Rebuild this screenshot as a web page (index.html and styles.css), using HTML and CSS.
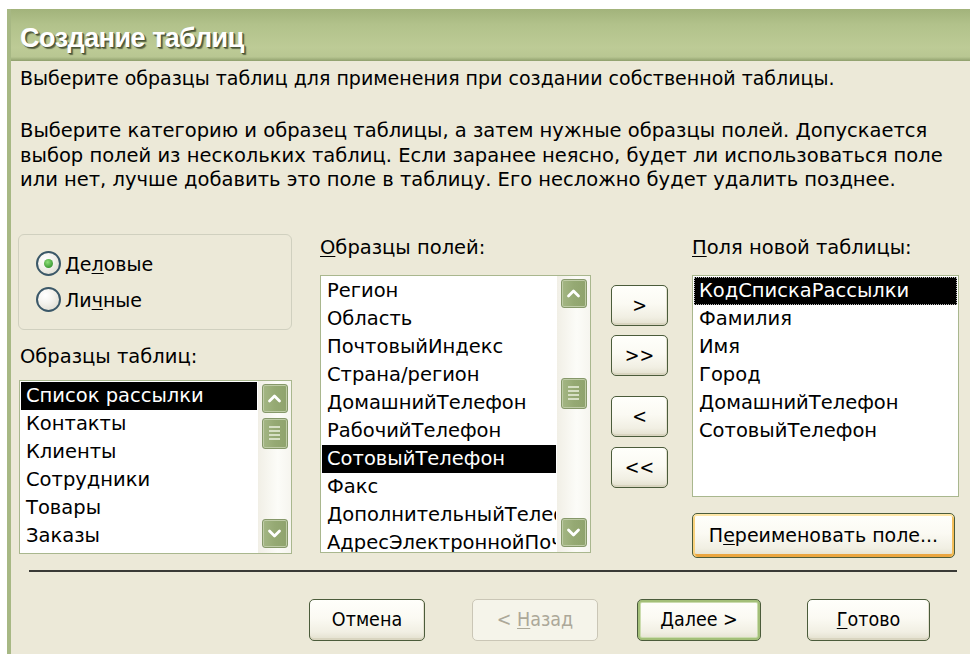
FILE: index.html
```html
<!DOCTYPE html>
<html lang="ru">
<head>
<meta charset="utf-8">
<title>Создание таблиц</title>
<link rel="stylesheet" href="styles.css">
</head>
<body>
<div class="window">
  <div class="titlebar"><span class="title">Создание таблиц</span></div>
  <div class="client">
    <p class="intro">Выберите образцы таблиц для применения при создании собственной таблицы.</p>
    <p class="desc">Выберите категорию и образец таблицы, а затем нужные образцы полей. Допускается<br>выбор полей из нескольких таблиц. Если заранее неясно, будет ли использоваться поле<br>или нет, лучше добавить это поле в таблицу. Его несложно будет удалить позднее.</p>

    <div class="main">
      <div class="col col-left">
        <div class="group">
          <label class="radio-row"><span class="radio checked"></span><span>Де<u>л</u>овые</span></label>
          <label class="radio-row"><span class="radio"></span><span>Ли<u>ч</u>ные</span></label>
        </div>
        <div class="label label-tables">Образцы таблиц:</div>
        <div class="listbox lb-tables">
          <div class="items">
            <div class="item sel">Список рассылки</div>
            <div class="item">Контакты</div>
            <div class="item">Клиенты</div>
            <div class="item">Сотрудники</div>
            <div class="item">Товары</div>
            <div class="item">Заказы</div>
          </div>
          <div class="scrollbar">
            <div class="sb-btn"><svg viewBox="0 0 21 17" class="chev"><polyline points="5.5,11 10.5,6 15.5,11"/></svg></div>
            <div class="sb-thumb" style="margin-top:5px"><i></i><i></i><i></i><i></i></div>
            <div class="sb-space"></div>
            <div class="sb-btn"><svg viewBox="0 0 21 17" class="chev"><polyline points="5.5,6 10.5,11 15.5,6"/></svg></div>
          </div>
        </div>
      </div>

      <div class="col col-mid">
        <div class="label"><u>О</u>бразцы полей:</div>
        <div class="listbox lb-fields">
          <div class="items">
            <div class="item">Регион</div>
            <div class="item">Область</div>
            <div class="item">ПочтовыйИндекс</div>
            <div class="item">Страна/регион</div>
            <div class="item">ДомашнийТелефон</div>
            <div class="item">РабочийТелефон</div>
            <div class="item sel">СотовыйТелефон</div>
            <div class="item">Факс</div>
            <div class="item">ДополнительныйТелефон</div>
            <div class="item">АдресЭлектроннойПочты</div>
          </div>
          <div class="scrollbar">
            <div class="sb-btn"><svg viewBox="0 0 21 17" class="chev"><polyline points="5.5,11 10.5,6 15.5,11"/></svg></div>
            <div class="sb-thumb" style="margin-top:70px"><i></i><i></i><i></i><i></i></div>
            <div class="sb-space"></div>
            <div class="sb-btn"><svg viewBox="0 0 21 17" class="chev"><polyline points="5.5,6 10.5,11 15.5,6"/></svg></div>
          </div>
        </div>
      </div>

      <div class="col col-move">
        <button class="btn move">&gt;</button>
        <button class="btn move">&gt;&gt;</button>
        <button class="btn move move-back">&lt;</button>
        <button class="btn move">&lt;&lt;</button>
      </div>

      <div class="col col-right">
        <div class="label"><u>П</u>оля новой таблицы:</div>
        <div class="listbox lb-new">
          <div class="items">
            <div class="item sel focus">КодСпискаРассылки</div>
            <div class="item">Фамилия</div>
            <div class="item">Имя</div>
            <div class="item">Город</div>
            <div class="item">ДомашнийТелефон</div>
            <div class="item">СотовыйТелефон</div>
          </div>
        </div>
        <button class="btn hot rename">П<u>е</u>реименовать поле...</button>
      </div>
    </div>

    <div class="separator"></div>

    <div class="footer">
      <button class="btn cancel">Отмена</button>
      <button class="btn back" disabled>&lt; <u>Н</u>азад</button>
      <button class="btn default next"><u>Д</u>алее &gt;</button>
      <button class="btn finish"><u>Г</u>отово</button>
    </div>
  </div>
</div>
</body>
</html>
```

FILE: styles.css
```css
* {
  box-sizing: border-box;
}

html,
body {
  margin: 0;
  padding: 0;
}

body {
  width: 970px;
  height: 654px;
  overflow: hidden;
  background: #ffffff;
  font-family: "DejaVu Sans", "Liberation Sans", sans-serif;
  font-size: 19px;
  color: #000000;
}

u {
  text-decoration: underline;
  text-underline-offset: 2px;
}

/* ---------- window frame ---------- */

.window {
  margin: 9px 0 0 7px;
  height: 645px;
  border-left: 4px solid #a7b884;
  background: #ece9d8;
}

.titlebar {
  height: 52px;
  padding: 13px 0 0 9px;
  background: linear-gradient(#a2b37b 0%, #b2c28b 30%, #bdcb96 75%, #b8c692 92%, #8f9f6c 100%);
}

.title {
  font-family: "Liberation Sans", sans-serif;
  font-weight: bold;
  font-size: 27px;
  line-height: 32px;
  letter-spacing: -0.5px;
  color: #ffffff;
  text-shadow: 1px 1px 0 #4a5435, 2px 2px 1px rgba(36, 42, 22, 0.6);
}

/* ---------- texts ---------- */

.intro,
.desc {
  margin: 0;
  padding-left: 9px;
  white-space: nowrap;
}

.intro {
  margin-top: 5px;
  line-height: 24px;
}

.desc {
  margin-top: 29px;
  font-size: 19.5px;
  line-height: 24.5px;
}

.label {
  font-size: 19.5px;
  line-height: 24px;
  white-space: nowrap;
}

/* ---------- main area ---------- */

.main {
  display: flex;
  align-items: flex-start;
  margin-top: 41px;
  padding-left: 7px;
}

.col {
  display: flex;
  flex-direction: column;
}

.col-left {
  width: 274px;
}

.col-mid {
  width: 271px;
  margin-left: 28px;
  padding-top: 2px;
}

.col-move {
  width: 57px;
  margin-left: 20px;
  padding-top: 51px;
}

.col-right {
  width: 267px;
  margin-left: 24px;
  padding-top: 2px;
}

/* radio group */

.group {
  height: 96px;
  border: 1px solid #d0d0bf;
  border-radius: 6px;
  padding: 17px 0 0 17px;
  display: flex;
  flex-direction: column;
  gap: 12px;
}

.radio-row {
  display: flex;
  align-items: center;
  gap: 4px;
  height: 24px;
}

.radio {
  width: 25px;
  height: 25px;
  border-radius: 50%;
  border: 2px solid #3b5868;
  background: radial-gradient(circle at 35% 30%, #ffffff 0%, #f4f3ee 40%, #d9d6c8 100%);
  display: flex;
  align-items: center;
  justify-content: center;
}

.radio.checked::after {
  content: "";
  width: 9px;
  height: 9px;
  border-radius: 50%;
  background: radial-gradient(circle at 40% 35%, #8fe07a 0%, #3f9c36 70%, #2b7a25 100%);
}

.label-tables {
  margin-top: 15px;
  padding-left: 2px;
}

/* list boxes */

.listbox {
  display: flex;
  background: #ffffff;
  border: 1px solid #a9b78e;
  overflow: hidden;
}

.items {
  flex: 1;
  min-width: 0;
  padding: 1px;
  overflow: hidden;
}

.item {
  height: 28px;
  line-height: 28px;
  padding-left: 5px;
  font-size: 19.5px;
  white-space: nowrap;
  overflow: hidden;
}

.item.sel {
  background: #000000;
  color: #ffffff;
}

.item.focus {
  outline: 1px dotted #b8b8b8;
  outline-offset: -1px;
}

.lb-tables {
  margin-top: 11px;
  margin-left: 1px;
  height: 174px;
}

.lb-fields {
  margin-top: 15px;
  height: 278px;
}

.lb-new {
  margin-top: 15px;
  height: 222px;
}

/* scroll bars */

.scrollbar {
  width: 33px;
  flex: none;
  display: flex;
  flex-direction: column;
  align-items: center;
  padding: 3px 0 5px;
  background: linear-gradient(90deg, #f1efe6, #fcfcf8 60%, #f6f5ef);
}

.sb-btn,
.sb-thumb {
  width: 26px;
  border-radius: 3px;
  border: 1px solid #86986a;
  background: linear-gradient(90deg, #a4b684, #95a973 50%, #8fa36d);
  box-shadow: inset 0 0 0 1px #bfcca6;
}

.sb-btn {
  height: 29px;
  display: flex;
  align-items: center;
  justify-content: center;
}

.sb-thumb {
  height: 31px;
  display: flex;
  flex-direction: column;
  align-items: center;
  justify-content: center;
  gap: 2px;
}

.sb-thumb i {
  display: block;
  width: 11px;
  height: 2px;
  background: #d6dfc4;
}

.sb-space {
  flex: 1;
}

.chev {
  width: 21px;
  height: 17px;
}

.chev polyline {
  fill: none;
  stroke: #ffffff;
  stroke-width: 2.8;
  stroke-linecap: round;
  stroke-linejoin: round;
}

/* ---------- push buttons ---------- */

.btn {
  font-family: "DejaVu Sans Condensed", "Liberation Sans", sans-serif;
  font-size: 19.5px;
  color: #000000;
  padding: 0;
  border: 1px solid #4b5c3b;
  border-radius: 5px;
  background: linear-gradient(#fffffb 0%, #fbfaf3 45%, #f1efe3 80%, #e2dfcd 100%);
  box-shadow: inset 0 -2px 0 #d9d5c0, inset -1px 0 0 #e4e1d0;
  white-space: nowrap;
}

.move {
  height: 41px;
  width: 57px;
}

.move + .move {
  margin-top: 9px;
}

.move + .move-back {
  margin-top: 20px;
}

.move-back + .move {
  margin-top: 10px;
}

.rename {
  margin-top: 16px;
  width: 263px;
  height: 45px;
  font-family: "DejaVu Sans", "Liberation Sans", sans-serif;
  font-size: 19px;
}

.btn.hot {
  box-shadow: inset 0 2px 0 #ffe7a8, inset 2px 0 0 #f9d27e, inset -2px 0 0 #f4be5a, inset 0 -3px 0 #eba640;
}

.btn.default {
  box-shadow: inset 0 0 0 2px #a3bf78, inset 0 0 0 3px #cbdcae;
}

.btn:disabled {
  color: #aca899;
  border-color: #cac6b6;
  background: #f5f4ea;
  box-shadow: none;
}

.separator {
  margin: 12px 0 0 18px;
  width: 928px;
  height: 2px;
  background: #3a3a36;
}

.footer {
  display: flex;
  margin-top: 27px;
  padding-left: 298px;
}

.footer .btn {
  height: 42px;
}

.cancel {
  width: 116px;
}

.back {
  width: 126px;
  margin-left: 47px;
}

.next {
  width: 124px;
  margin-left: 39px;
}

.finish {
  width: 123px;
  margin-left: 46px;
}
```
